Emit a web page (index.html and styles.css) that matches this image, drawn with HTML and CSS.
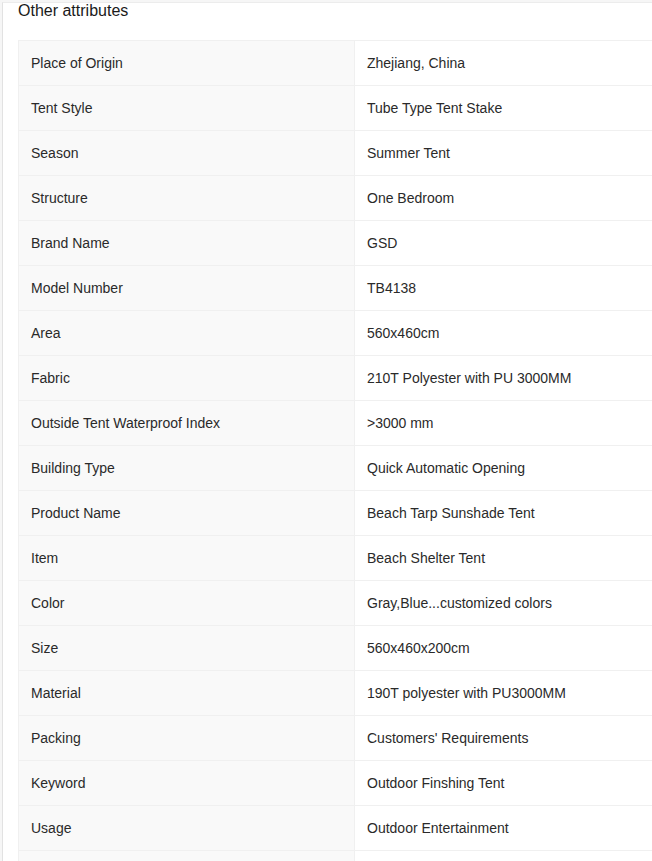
FILE: index.html
```html
<!DOCTYPE html>
<html>
<head>
<meta charset="utf-8">
<link rel="stylesheet" href="styles.css">
</head>
<body>
<div class="page">
  <div class="card">
    <h2 class="title">Other attributes</h2>
    <div class="attrs">
      <div class="row"><div class="k">Place of Origin</div><div class="v">Zhejiang, China</div></div>
      <div class="row"><div class="k">Tent Style</div><div class="v">Tube Type Tent Stake</div></div>
      <div class="row"><div class="k">Season</div><div class="v">Summer Tent</div></div>
      <div class="row"><div class="k">Structure</div><div class="v">One Bedroom</div></div>
      <div class="row"><div class="k">Brand Name</div><div class="v">GSD</div></div>
      <div class="row"><div class="k">Model Number</div><div class="v">TB4138</div></div>
      <div class="row"><div class="k">Area</div><div class="v">560x460cm</div></div>
      <div class="row"><div class="k">Fabric</div><div class="v">210T Polyester with PU 3000MM</div></div>
      <div class="row"><div class="k">Outside Tent Waterproof Index</div><div class="v">&gt;3000 mm</div></div>
      <div class="row"><div class="k">Building Type</div><div class="v">Quick Automatic Opening</div></div>
      <div class="row"><div class="k">Product Name</div><div class="v">Beach Tarp Sunshade Tent</div></div>
      <div class="row"><div class="k">Item</div><div class="v">Beach Shelter Tent</div></div>
      <div class="row"><div class="k">Color</div><div class="v">Gray,Blue...customized colors</div></div>
      <div class="row"><div class="k">Size</div><div class="v">560x460x200cm</div></div>
      <div class="row"><div class="k">Material</div><div class="v">190T polyester with PU3000MM</div></div>
      <div class="row"><div class="k">Packing</div><div class="v">Customers' Requirements</div></div>
      <div class="row"><div class="k">Keyword</div><div class="v">Outdoor Finshing Tent</div></div>
      <div class="row"><div class="k">Usage</div><div class="v">Outdoor Entertainment</div></div>
      <div class="row"><div class="k"></div><div class="v"></div></div>
    </div>
  </div>
</div>
</body>
</html>
```
FILE: styles.css
```css
html, body {
  margin: 0;
  padding: 0;
  background: #ffffff;
  overflow: hidden;
}
body {
  font-family: "Liberation Sans", Arial, sans-serif;
  color: #2a2a2a;
}
.page {
  padding-left: 2px;
  background: #f6f6f6;
  height: 861px;
  overflow: hidden;
}
.card {
  margin-top: 2px;
  background: #ffffff;
  border-left: 1px solid #e2e2e2;
  border-top: 1px solid #ececec;
  padding: 0 0 0 15px;
  height: 861px;
  overflow: hidden;
}
.title {
  margin: -3px 0 0 0;
  font-size: 16px;
  font-weight: normal;
  line-height: 22px;
  color: #1a1a1a;
  padding-bottom: 18px;
}
.attrs {
  width: 674px;
  border-top: 1px solid #f0f0f0;
  border-left: 1px solid #f0f0f0;
}
.row {
  display: grid;
  grid-template-columns: 336px 1fr;
  height: 45px;
  border-bottom: 1px solid #f0f0f0;
  box-sizing: border-box;
  font-size: 14px;
}
.k {
  background: #f9f9f9;
  border-right: 1px solid #f0f0f0;
  padding-left: 12px;
  display: flex;
  align-items: center;
}
.v {
  padding-left: 12px;
  display: flex;
  align-items: center;
}
```
